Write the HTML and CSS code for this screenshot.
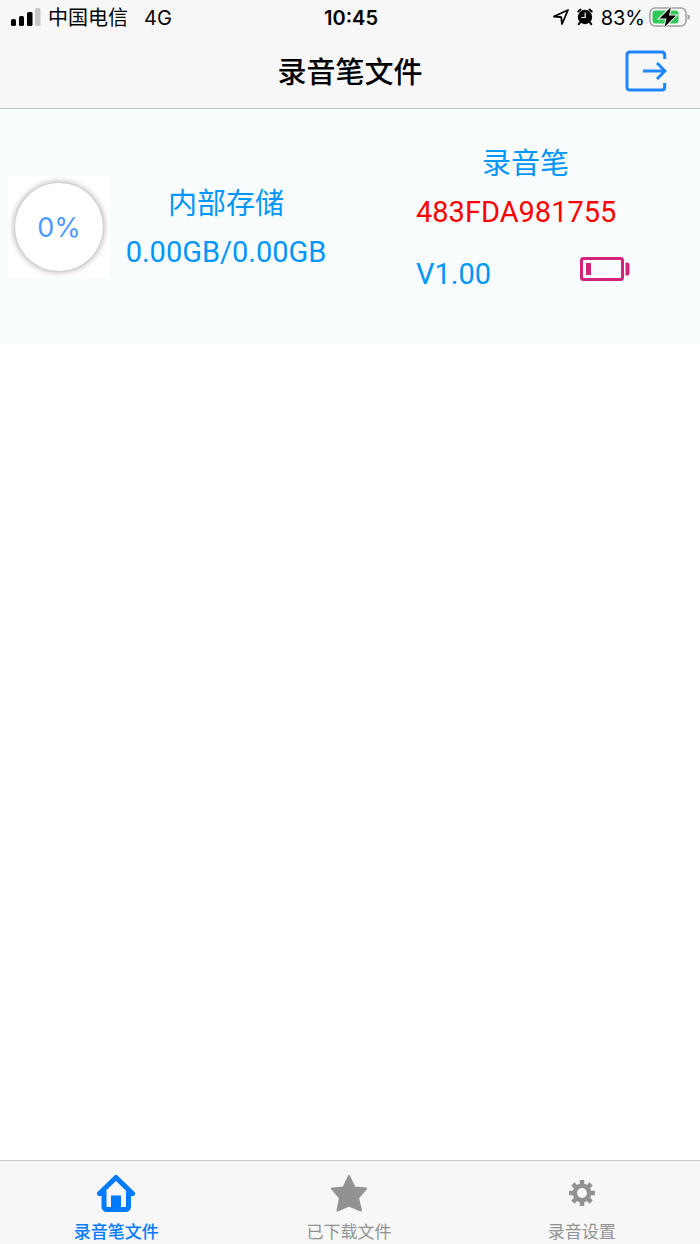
FILE: index.html
```html
<!DOCTYPE html>
<html lang="zh-CN">
<head>
<meta charset="utf-8">
<meta name="viewport" content="width=device-width, initial-scale=1">
<title>录音笔文件</title>
<link rel="stylesheet" href="styles.css">
</head>
<body>
<div class="app">
  <header class="top">
    <div class="status">
      <div class="status-left">
        <svg class="signal" width="30" height="18" viewBox="0 0 30 18" aria-hidden="true">
          <rect x="0" y="11" width="5" height="7" rx="1.6"/>
          <rect x="8" y="8" width="5" height="10" rx="1.6"/>
          <rect x="16" y="4" width="5.5" height="14" rx="1.6"/>
          <rect x="24" y="0" width="5.5" height="18" rx="1.6" fill="#c8c8c8"/>
        </svg>
        <span class="carrier">中国电信</span>
        <span>4G</span>
      </div>
      <time class="clock">10:45</time>
      <div class="status-right">
        <svg width="18" height="18" viewBox="0 0 18 18" aria-hidden="true">
          <path d="M2 8.500 L16 2 L10 16 L9.200 9.200 Z" fill="none" stroke="#000" stroke-width="1.8" stroke-linejoin="round"/>
        </svg>
        <svg class="alarm" width="16" height="18" viewBox="0 0 16 18" aria-hidden="true">
          <circle cx="8" cy="9" r="7.200"/>
          <path d="M1.300 3.500 L3.500 1.600 M14.700 3.500 L12.500 1.600 M3 14.500 L1.800 16.200 M13 14.500 L14.200 16.200" stroke="#000" stroke-width="2" stroke-linecap="round"/>
          <path d="M8.200 4.500 V9.500 H4.400" fill="none" stroke="#fff" stroke-width="1.200"/>
        </svg>
        <span class="percent">83%</span>
        <svg class="power" width="42" height="22" viewBox="0 0 42 22" aria-hidden="true">
          <rect x="1" y="2" width="36" height="18" rx="5" fill="none" stroke="#a0a0a0" stroke-width="1.5"/>
          <rect x="3.5" y="4.5" width="26" height="13" rx="3" fill="#34c759"/>
          <path d="M38.5 8 Q41 9 41 11 Q41 13 38.5 14 Z" fill="#a0a0a0"/>
          <path d="M22 1 L10.5 12.5 H17.5 L15.5 21 L27 9.500 H20 Z" stroke="#f7f7f7" stroke-width="2" paint-order="stroke"/>
        </svg>
      </div>
    </div>
    <div class="title-bar">
      <h1 class="title">录音笔文件</h1>
      <button class="exit" type="button" aria-label="退出">
        <svg width="42" height="42" viewBox="0 0 42 42" fill="none" stroke="#1e86ff" aria-hidden="true">
          <path d="M39.700 9 V5 Q39.700 2 36.700 2 H5 Q2 2 2 5 V37 Q2 40 5 40 H36.700 Q39.700 40 39.700 37 V33" stroke-width="3"/>
          <path d="M18 21 H40 M32 13 L40 21 L32 29" stroke-width="3"/>
        </svg>
      </button>
    </div>
  </header>

  <main class="content">
    <section class="device">
      <div class="usage"><div class="ring">0%</div></div>
      <div class="storage">
        <p>内部存储</p>
        <p>0.00GB/0.00GB</p>
      </div>
      <div class="pen">
        <p class="pen-name">录音笔</p>
        <p class="serial">483FDA981755</p>
        <div class="version">
          <span>V1.00</span>
          <svg class="cell" width="50" height="24" viewBox="0 0 50 24" aria-label="电量低" role="img">
            <rect x="1.500" y="1.500" width="41" height="21" rx="2" fill="none" stroke="#d4237a" stroke-width="3"/>
            <rect x="6" y="6" width="5" height="12" fill="#d4237a"/>
            <path d="M45.500 5.500 H47.500 Q49.500 5.500 49.500 8 V16 Q49.500 18.500 47.500 18.500 H45.500 Z" fill="#d4237a"/>
          </svg>
        </div>
      </div>
    </section>
  </main>

  <nav class="tabs">
    <a class="tab tab-active" href="#files" aria-current="page">
      <svg width="40" height="40" viewBox="0 0 40 40" aria-hidden="true">
        <path d="M3.500 20.500 L20 4.500 L36.500 20.500 M8 19 V33 Q8 36.500 11.500 36.500 H29 Q32.500 36.500 32.500 33 V19" fill="none" stroke="#007aff" stroke-width="5" stroke-linecap="round" stroke-linejoin="round"/>
        <path d="M3 18 L9 15 L10 23 H4 Z M37 18 L31 15 L30 23 H36 Z M15 22.500 H25 V37 H15 Z" fill="#007aff"/>
      </svg>
      <span>录音笔文件</span>
    </a>
    <a class="tab" href="#downloads">
      <svg width="40" height="40" viewBox="0 0 40 40" aria-hidden="true">
        <path d="M20 3 L25.500 14.500 L37 15.500 L29 25 L32 37.500 L20 32.500 L8.500 37.500 L11 25 L3 15.500 L14.500 14.500 Z" fill="#929292" stroke="#929292" stroke-width="2" stroke-linejoin="round"/>
      </svg>
      <span>已下载文件</span>
    </a>
    <a class="tab" href="#settings">
      <svg width="40" height="40" viewBox="0 0 40 40" aria-hidden="true">
        <g stroke="#929292" fill="none">
          <circle cx="20" cy="20" r="7.200" stroke-width="4.500"/>
          <path d="M20 7 V12 M20 28 V33 M7 20 H12 M28 20 H33 M10.800 10.800 L14.300 14.300 M25.700 25.700 L29.200 29.200 M29.200 10.800 L25.700 14.300 M14.300 25.700 L10.800 29.200" stroke-width="4.500"/>
        </g>
      </svg>
      <span>录音设置</span>
    </a>
  </nav>
</div>
</body>
</html>
```
FILE: styles.css
```css
* { box-sizing: border-box; }
body {
  margin: 0;
  background: #fff;
  color: #000;
  font-family: Inter, "Noto Sans CJK SC", sans-serif;
}
p, h1 { margin: 0; }
.app {
  display: flex;
  flex-direction: column;
  min-height: 100vh;
}
.top {
  background: #f7f7f7;
  border-bottom: 1px solid #c8c8c8;
}
.status {
  display: grid;
  grid-template-columns: 1fr auto 1fr;
  align-items: center;
  height: 36px;
  padding: 0 9px 0 11px;
  font-size: 20px;
  line-height: 36px;
}
.status-left, .status-right {
  display: flex;
  align-items: center;
}
.signal { margin-bottom: 2px; }
.carrier { margin: 0 16px 0 7px; }
.clock { font-weight: 600; }
.status-right { justify-content: flex-end; }
.status-right svg { margin-bottom: 2px; }
.alarm { margin: 0 8px 0 7px; }
.percent { margin-right: 4px; }
.title-bar {
  display: grid;
  grid-template-columns: 1fr auto 1fr;
  align-items: center;
  height: 72px;
  padding: 0 33px 2px;
}
.title {
  grid-column: 2;
  padding-top: 4px;
  font-size: 29px;
  line-height: 40px;
  font-weight: 500;
}
.exit {
  justify-self: end;
  padding: 0;
  border: 0;
  background: none;
}
.exit svg { display: block; }
.content { flex: 1; }
.device {
  display: grid;
  grid-template-columns: 102px 206px 1fr;
  align-items: center;
  column-gap: 13px;
  height: 236px;
  padding: 0 70px 0 8px;
  background: #f8fcfd;
  color: #0096fa;
  font-family: Roboto, "Noto Sans CJK SC", sans-serif;
  font-size: 29px;
  line-height: 48px;
}
.usage {
  display: grid;
  place-items: center;
  height: 102px;
  background: #fff;
}
.ring {
  width: 88px;
  height: 88px;
  border-radius: 50%;
  background: #fff;
  box-shadow: 0 0 6px 1px #aaa;
  color: #4d9bff;
  font-family: Inter, sans-serif;
  font-size: 27px;
  line-height: 90px;
  text-align: center;
}
.storage {
  padding-top: 2px;
  text-align: center;
  white-space: nowrap;
}
.pen { padding: 0 0 16px 74px; }
.pen-name { padding-left: 66px; }
.serial { color: #f00; }
.version {
  display: flex;
  align-items: center;
  justify-content: space-between;
  margin-top: 14px;
}
.cell { margin-bottom: 10px; }
.tabs {
  display: grid;
  grid-template-columns: repeat(3, 1fr);
  height: 84px;
  padding-right: 2px;
  border-top: 1px solid #c8c8c8;
  background: #f7f7f7;
}
.tab {
  display: flex;
  flex-direction: column;
  align-items: center;
  padding-top: 12px;
  color: #929292;
  font-size: 17px;
  line-height: 38px;
  text-decoration: none;
}
.tab-active { color: #007aff; font-weight: 500; }
```
